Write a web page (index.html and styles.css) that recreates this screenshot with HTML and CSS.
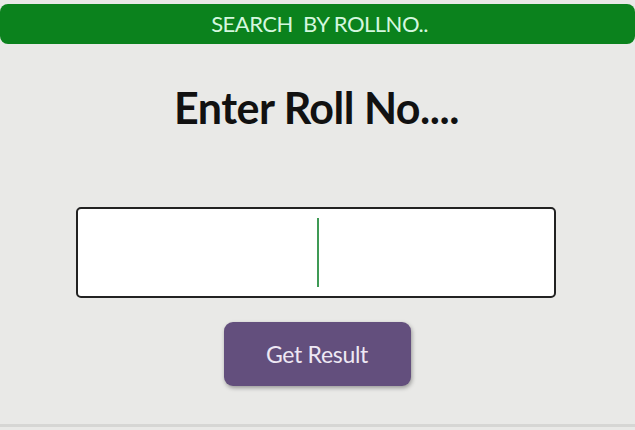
FILE: index.html
```html
<!DOCTYPE html>
<html>
<head>
<meta charset="utf-8">
<link rel="stylesheet" href="styles.css">
</head>
<body>
<div class="page">
  <div class="topbar">SEARCH&nbsp; BY ROLLNO..</div>
  <h1 class="title">Enter Roll No....</h1>
  <div class="field"><span class="caret"></span></div>
  <div class="actions"><button class="btn">Get Result</button></div>
</div>
</body>
</html>
```
FILE: styles.css
```css
html, body {
  margin: 0;
  padding: 0;
  background: #e9e9e7;
}
.page {
  width: 635px;
  height: 427px;
  box-sizing: border-box;
  padding-top: 4px;
  border-bottom: 3px solid #d6d6d4;
  display: flex;
  flex-direction: column;
  align-items: center;
  font-family: Lato, "Open Sans", sans-serif;
}
.topbar {
  align-self: stretch;
  height: 40px;
  background: #0b821d;
  border-radius: 8px;
  color: #d4f7df;
  font-size: 22px;
  line-height: 40px;
  text-align: center;
  letter-spacing: -0.5px;
  padding-left: 4px;
}
.title {
  margin: 38px 0 0 0;
  font-size: 43px;
  line-height: 52px;
  font-weight: 700;
  color: #111;
  letter-spacing: -0.5px;
  padding-right: 2px;
}
.field {
  margin-top: 73px;
  width: 480px;
  height: 91px;
  box-sizing: border-box;
  border: 2.5px solid #222;
  border-radius: 5px;
  background: #fff;
  display: flex;
  justify-content: center;
  align-items: center;
  margin-left: -4px;
}
.caret {
  width: 1.5px;
  height: 69px;
  background: #3f9a55;
  margin-left: 5px;
}
.actions {
  margin-top: 24px;
  display: flex;
  justify-content: center;
}
.btn {
  width: 187px;
  height: 64px;
  border: none;
  border-radius: 9px;
  background: #634f7d;
  color: #eee8f4;
  font-family: Lato, "Open Sans", sans-serif;
  font-size: 23px;
  letter-spacing: -0.3px;
  box-shadow: 1px 2px 4px rgba(0,0,0,0.35);
  margin-left: -1px;
}
```
